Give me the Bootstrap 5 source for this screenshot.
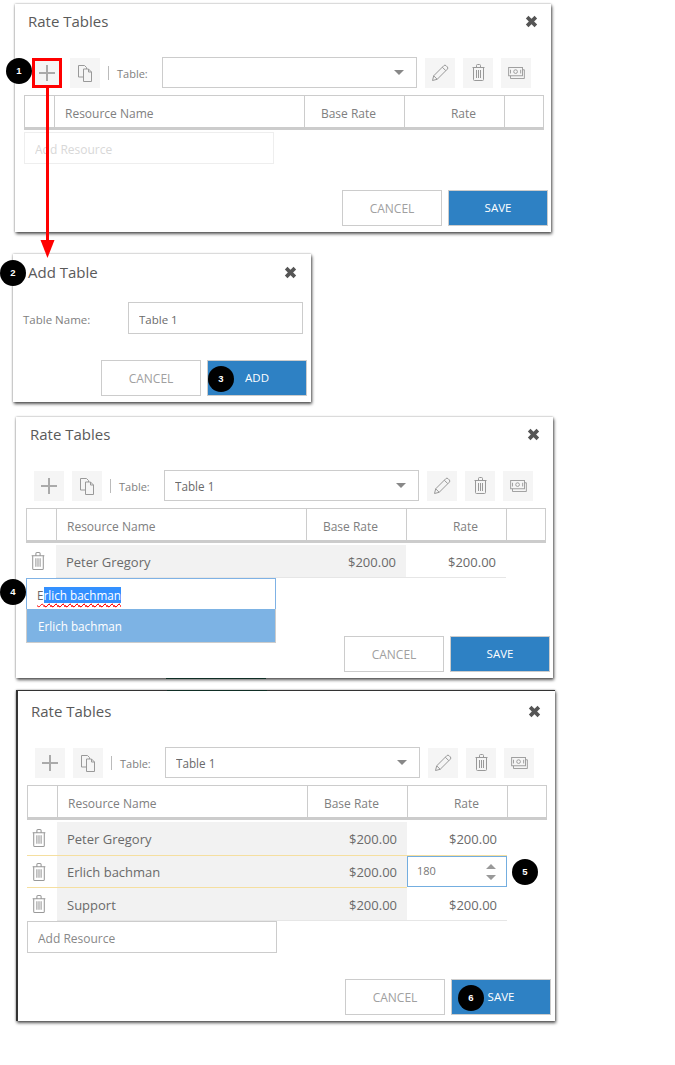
<!doctype html>
<html lang="en">
<head>
<meta charset="utf-8">
<title>Rate Tables</title>
<link href="https://cdn.jsdelivr.net/npm/bootstrap@5.3.0/dist/css/bootstrap.min.css" rel="stylesheet">
<style>
html,body{background:#fff}
body{font-family:"Open Sans","Noto Sans",sans-serif;font-size:12.5px;color:#666}
.stage{position:relative;width:675px;height:1065px;overflow:hidden;padding-top:4px}
.pnl{width:536px;background:#fff;margin-left:15px;position:relative;box-shadow:0 0 2px rgba(0,0,0,.35),1px 2px 3px rgba(0,0,0,.65)}
.pnl-two{width:298px;margin-left:13px;margin-top:22px}
.pnl-three{width:537px;margin-left:16px;margin-top:15px;padding-left:1px;height:261px}
.pnl-four{width:539px;margin-left:16px;margin-top:12px;padding-top:3px;border-top:1px solid #333;border-left:2px solid #333}
.pnl-three::after,.pnl-four::before{content:"";position:absolute;width:100px;height:1px;background:#0f2e25}
.pnl-three::after{bottom:-1px;left:150px}
.pnl-four::before{top:-1px;left:149px}
.phead{height:34px;padding:0 13px 0 13px}
.phead-add{height:36px;padding-left:15px}
.ptitle{font-size:15px;color:#5a5a5a;margin:0;font-weight:400}
.xbtn{width:13px;height:13px}
.pnl-four .xbtn{margin-right:1px}
.phead-add .xbtn{margin-right:1px}
.tools{margin-top:19px;height:31px;padding-left:17px}
.tbtn{width:30px;height:30px;background:#f5f5f5;border:0;padding:0;border-radius:0}
.tsep{width:1px;height:14px;background:#bbb;margin:0 8px}
.tlabel{width:45px;color:#808080;font-size:11px;padding-top:3px}
.sel{width:255px;height:31px;border:1px solid #ccc;border-radius:0;padding:3px 12px 0 10px;font-size:11.7px;color:#6a6a6a;background-position:right 12px center;background-size:10px 5px;background-image:url("data:image/svg+xml,%3Csvg xmlns='http://www.w3.org/2000/svg' viewBox='0 0 10 5'%3E%3Cpath d='M0 0h10L5 5z' fill='%23888'/%3E%3C/svg%3E")}
.sel:focus{box-shadow:none;border-color:#ccc}
.grid-h,.grid-r{display:grid;grid-template-columns:30px 250px 100px 100px 40px;width:520px;margin-left:9px}
.grid-h{margin-top:7px;margin-bottom:2px;height:35px;border:1px solid #ccc;border-bottom:3px solid #ccc;grid-template-columns:29px 250px 100px 100px 39px}
.grid-h>div{border-left:1px solid #ccc;display:flex;align-items:center;color:#808080;font-size:12px;padding-top:4px}
.grid-h>div:first-child{border-left:0}
.hname{padding-left:10px}
.hnum{justify-content:flex-end;padding-right:28px}
.grid-r{height:33px;align-items:stretch;font-size:13px;color:#6a6a6a}
.grid-r>div{display:flex;align-items:center;border-bottom:1px solid #e6e6e6}
.grid-r>div:nth-child(1){border-bottom-color:transparent;padding-left:5px}
.grid-r>div:nth-child(5){border:0}
.grid-r:has(+.rowhl)>div{border-bottom-color:transparent}
.cname{background:#f2f2f2;padding:3px 0 0 10px}
.cbase{background:#f2f2f2;justify-content:flex-end;padding:3px 10px 0 0}
.crate{justify-content:flex-end;padding:3px 10px 0 0}
.grid-r.rowhl>div:nth-child(-n+4){border-top:1px solid #f5dfa0;border-bottom:1px solid #f5dfa0}
.grid-r.rowhl>div:nth-child(1){border-color:#f5dfa0}
.grid-r.rowhl>div:nth-child(4){padding:0;border-bottom-color:transparent}
.rateinput{width:100%;height:100%;border:1px solid #74aee0;padding:0 9px;font-size:11px;color:#777}
.spin{width:10px;height:18px;margin-right:1px}
.addres{width:250px;height:32px;margin-left:9px;border:1px solid #ccc;border-radius:0;padding:2px 10px 0;font-size:12px;color:#888}
.addres::placeholder{color:#888;opacity:1}
.addres.faded{border-color:#eee}
.addres.faded::placeholder{color:#d8d8d8}
.foot{margin-top:26px;padding:0 3px 6px 0;gap:6px}
.pnl-two .foot,.pnl-four .foot{padding-right:4px}
.fbtn{width:100px;height:36px;border-radius:0;font-size:12px;padding:2px 0 0;border:1px solid #ccc}
.fcancel{background:#fff;color:#a0a0a0}
.fsave{background:#2e81c4;color:#fff;border:1px solid #ccc;font-size:11.5px;padding-top:0}
.fsave:hover{background:#2e81c4;color:#fff}
.formrow{margin-top:12px;padding-left:10px}
.formlabel{width:105px;color:#808080;font-size:11.5px;padding-top:3px}
.forminput{width:175px;height:32px;border:1px solid #ccc;border-radius:0;padding:2px 10px 0;font-size:11.5px;color:#6a6a6a}
.combo{width:250px;margin-left:9px;position:relative;height:32px}
.comboinput{height:32px;border:1px solid #7fb2e5;padding:3px 10px 0;font-size:11.7px;color:#666;display:flex;align-items:center}
.typed{text-decoration:underline wavy #f00 1px;text-underline-offset:3px;white-space:pre}
.picked{background:#3390ff;color:#fff;text-decoration:underline wavy #f00 1px;text-underline-offset:3px}
.combolist{position:absolute;left:0;right:0;top:31px;height:34px;background:#7db3e4;color:#fff;border:1px solid #ccc;border-top:0;padding:3px 10px 0 11px;display:flex;align-items:center;font-size:11.7px;z-index:2}
.callout{position:absolute;width:26px;height:26px;border-radius:50%;background:#000;color:#fff;font-size:9.500px;font-weight:700;display:flex;align-items:center;justify-content:center;font-family:"Liberation Sans",sans-serif;z-index:5}
.k1{left:6px;top:58px}.k2{left:0;top:260px}.k3{left:208px;top:366px}.k4{left:0;top:579px}.k5{left:512px;top:859px}.k6{left:458px;top:985px}
.overlay{position:absolute;left:0;top:0;z-index:4;pointer-events:none}
.ic{display:block;margin:auto;fill:none;stroke:#999;stroke-width:1}
.ic-trash{width:13px;height:17px}
.ic-trash-lg{width:14px;height:18px;display:block}
</style>
</head>
<body class="m-0">
<svg width="0" height="0" class="position-absolute">
  <symbol id="i-plus" viewBox="0 0 16 16"><path d="M8 0v16M0 8h16" stroke-width="2" stroke="#aaa"/></symbol>
  <symbol id="i-copy" viewBox="0 0 16 18"><path d="M7 13H1.500V1.500h6l2 2V5"/><path d="M6.500 5h5l3 3v9.500h-8z"/><path d="M11.500 5v3h3"/></symbol>
  <symbol id="i-pencil" viewBox="0 0 18 18"><path d="M1.500 16.500l1.200-4.700L12.800 1.700a1.600 1.600 0 0 1 2.300 0l1.200 1.200a1.600 1.600 0 0 1 0 2.300L6.200 15.300z"/><path d="M2.700 11.800l3.500 3.500M11.300 3.200l3.500 3.500"/></symbol>
  <symbol id="i-trash" viewBox="0 0 13 17"><path d="M.5 3.500h12M4.500 3.500v-2a1 1 0 0 1 1-1h2a1 1 0 0 1 1 1v2"/><path d="M1.500 3.500v12a1 1 0 0 0 1 1h8a1 1 0 0 0 1-1v-12"/><path d="M4.500 6v8M6.500 6v8M8.500 6v8"/></symbol>
  <symbol id="i-money" viewBox="0 0 18 13"><rect x=".5" y=".5" width="15" height="9"/><circle cx="8" cy="5" r="2"/><path d="M2.500 3v4M13.500 3v4"/><path d="M15.500 3h2v9.500H2.500v-3"/></symbol>
  <symbol id="i-x" viewBox="0 0 12 12"><path d="M2 2l8 8M10 2l-8 8" stroke="#555" stroke-width="3.400" fill="none"/></symbol>
</svg>

<div class="stage">

  <section class="pnl">
    <div class="phead d-flex align-items-center justify-content-between"><h2 class="ptitle">Rate Tables</h2><svg class="xbtn"><use href="#i-x"/></svg></div>
    <div class="tools d-flex align-items-center">
      <button class="tbtn"><svg class="ic" width="16" height="16"><use href="#i-plus"/></svg></button>
      <button class="tbtn ms-2"><svg class="ic" width="16" height="18"><use href="#i-copy"/></svg></button>
      <span class="tsep"></span><span class="tlabel">Table:</span>
      <select class="form-select sel"><option></option></select>
      <button class="tbtn ms-2"><svg class="ic" width="18" height="18"><use href="#i-pencil"/></svg></button>
      <button class="tbtn ms-2"><svg class="ic ic-trash"><use href="#i-trash"/></svg></button>
      <button class="tbtn ms-2"><svg class="ic" width="17" height="12"><use href="#i-money"/></svg></button>
    </div>
    <div class="grid-h"><div></div><div class="hname">Resource Name</div><div class="hnum">Base Rate</div><div class="hnum">Rate</div><div></div></div>
    <input class="form-control addres faded" placeholder="Add Resource">
    <div class="foot d-flex justify-content-end"><button class="btn fbtn fcancel">CANCEL</button><button class="btn fbtn fsave">SAVE</button></div>
  </section>

  <section class="pnl pnl-two">
    <div class="phead phead-add d-flex align-items-center justify-content-between"><h2 class="ptitle">Add Table</h2><svg class="xbtn"><use href="#i-x"/></svg></div>
    <div class="formrow d-flex align-items-center"><label class="formlabel">Table Name:</label><input class="form-control forminput" value="Table 1"></div>
    <div class="foot d-flex justify-content-end"><button class="btn fbtn fcancel">CANCEL</button><button class="btn fbtn fsave">ADD</button></div>
  </section>

  <section class="pnl pnl-three">
    <div class="phead d-flex align-items-center justify-content-between"><h2 class="ptitle">Rate Tables</h2><svg class="xbtn"><use href="#i-x"/></svg></div>
    <div class="tools d-flex align-items-center">
      <button class="tbtn"><svg class="ic" width="16" height="16"><use href="#i-plus"/></svg></button>
      <button class="tbtn ms-2"><svg class="ic" width="16" height="18"><use href="#i-copy"/></svg></button>
      <span class="tsep"></span><span class="tlabel">Table:</span>
      <select class="form-select sel"><option>Table 1</option></select>
      <button class="tbtn ms-2"><svg class="ic" width="18" height="18"><use href="#i-pencil"/></svg></button>
      <button class="tbtn ms-2"><svg class="ic ic-trash"><use href="#i-trash"/></svg></button>
      <button class="tbtn ms-2"><svg class="ic" width="17" height="12"><use href="#i-money"/></svg></button>
    </div>
    <div class="grid-h"><div></div><div class="hname">Resource Name</div><div class="hnum">Base Rate</div><div class="hnum">Rate</div><div></div></div>
    <div class="grid-r"><div><svg class="ic-trash-lg ic m-0"><use href="#i-trash"/></svg></div><div class="cname">Peter Gregory</div><div class="cbase">$200.00</div><div class="crate">$200.00</div><div></div></div>
    <div class="combo">
      <div class="comboinput"><span class="typed">E<span class="picked">rlich bachman</span></span></div>
      <div class="combolist">Erlich bachman</div>
    </div>
    <div class="foot d-flex justify-content-end"><button class="btn fbtn fcancel">CANCEL</button><button class="btn fbtn fsave">SAVE</button></div>
  </section>

  <section class="pnl pnl-four">
    <div class="phead d-flex align-items-center justify-content-between"><h2 class="ptitle">Rate Tables</h2><svg class="xbtn"><use href="#i-x"/></svg></div>
    <div class="tools d-flex align-items-center">
      <button class="tbtn"><svg class="ic" width="16" height="16"><use href="#i-plus"/></svg></button>
      <button class="tbtn ms-2"><svg class="ic" width="16" height="18"><use href="#i-copy"/></svg></button>
      <span class="tsep"></span><span class="tlabel">Table:</span>
      <select class="form-select sel"><option>Table 1</option></select>
      <button class="tbtn ms-2"><svg class="ic" width="18" height="18"><use href="#i-pencil"/></svg></button>
      <button class="tbtn ms-2"><svg class="ic ic-trash"><use href="#i-trash"/></svg></button>
      <button class="tbtn ms-2"><svg class="ic" width="17" height="12"><use href="#i-money"/></svg></button>
    </div>
    <div class="grid-h"><div></div><div class="hname">Resource Name</div><div class="hnum">Base Rate</div><div class="hnum">Rate</div><div></div></div>
    <div class="grid-r"><div><svg class="ic-trash-lg ic m-0"><use href="#i-trash"/></svg></div><div class="cname">Peter Gregory</div><div class="cbase">$200.00</div><div class="crate">$200.00</div><div></div></div>
    <div class="grid-r rowhl"><div><svg class="ic-trash-lg ic m-0"><use href="#i-trash"/></svg></div><div class="cname">Erlich bachman</div><div class="cbase">$200.00</div><div><div class="rateinput d-flex align-items-center justify-content-between"><span>180</span><svg class="spin" viewBox="0 0 10 18"><path d="M5 1l5 5H0zM5 17l5-5H0z" fill="#999"/></svg></div></div><div></div></div>
    <div class="grid-r"><div><svg class="ic-trash-lg ic m-0"><use href="#i-trash"/></svg></div><div class="cname">Support</div><div class="cbase">$200.00</div><div class="crate">$200.00</div><div></div></div>
    <input class="form-control addres" placeholder="Add Resource">
    <div class="foot d-flex justify-content-end"><button class="btn fbtn fcancel">CANCEL</button><button class="btn fbtn fsave">SAVE</button></div>
  </section>

  <svg class="overlay" width="675" height="300" viewBox="0 0 675 300">
    <rect x="33.500" y="59.500" width="27" height="27" fill="none" stroke="#f00" stroke-width="3"/>
    <path d="M47.500 88v155" stroke="#f00" stroke-width="3"/>
    <path d="M40.500 240h14l-7 18z" fill="#f00"/>
  </svg>
  <span class="callout k1">1</span><span class="callout k2">2</span><span class="callout k3">3</span>
  <span class="callout k4">4</span><span class="callout k5">5</span><span class="callout k6">6</span>
</div>
<script src="https://cdn.jsdelivr.net/npm/bootstrap@5.3.0/dist/js/bootstrap.bundle.min.js"></script>
</body>
</html>
